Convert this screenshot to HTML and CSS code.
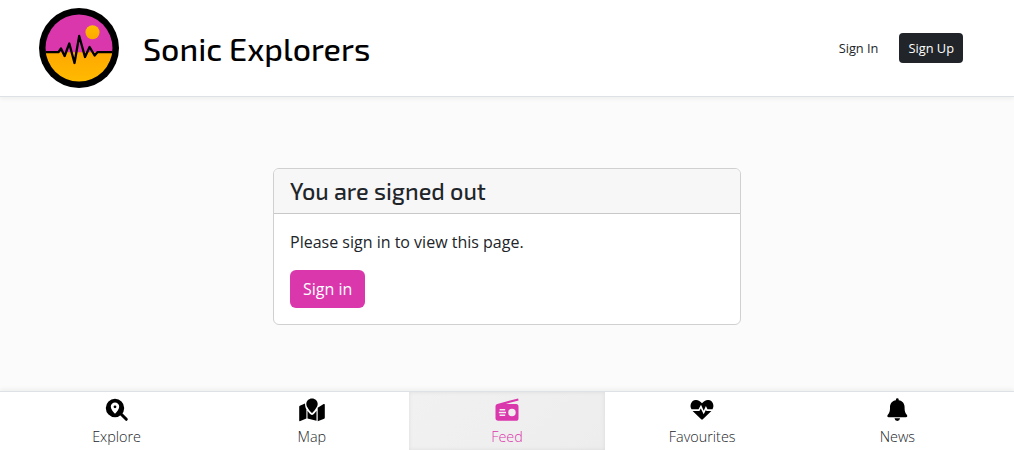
FILE: index.html
```
<!DOCTYPE html>
<html lang="en">
<head>
<meta charset="utf-8">
<title>Sonic Explorers</title>
<link rel="stylesheet" href="styles.css">
</head>
<body>
<header class="header">
  <a class="brand">
    <svg class="logo" viewBox="0 0 80 80">
      <defs>
        <linearGradient id="amber" x1="0" y1="1" x2="0" y2="0"><stop offset="0" stop-color="#ffa800"/><stop offset="1" stop-color="#ffbe00"/></linearGradient>
        <linearGradient id="ground" x1="0" y1="0" x2="0" y2="1"><stop offset="0" stop-color="#ffa800"/><stop offset="1" stop-color="#ffbe00"/></linearGradient>
        <clipPath id="disc"><circle cx="40" cy="40" r="33.500"/></clipPath>
      </defs>
      <circle cx="40" cy="40" r="40"/>
      <g clip-path="url(#disc)">
        <path fill="#db37ad" d="M0 0h80v45H0z"/>
        <path fill="url(#ground)" d="M0 44.200h80V80H0z"/>
        <path class="wave" d="M4 44.200h15.500l2.500-3.700 3.600 7.500 4.700-12.500 5.200 19.500 4.700-27 5.800 21 4.600-10 5 8.500 2.800-3.300H76"/>
      </g>
      <circle cx="53.500" cy="24.300" r="7" fill="url(#amber)"/>
    </svg>
    <h1 class="title">Sonic Explorers</h1>
  </a>
  <div class="actions">
    <a class="btn-small">Sign In</a>
    <a class="btn-small btn-dark">Sign Up</a>
  </div>
</header>
<main class="main">
  <section class="card">
    <h2 class="card-header">You are signed out</h2>
    <div class="card-body">
      <p class="message">Please sign in to view this page.</p>
      <a class="btn-primary">Sign in</a>
    </div>
  </section>
</main>
<nav class="nav">
  <a class="nav-item">
    <svg class="icon" viewBox="0 0 28 24"><path fill-rule="evenodd" d="M12 .8a9.200 9.200 0 1 1 0 18.400 9.200 9.200 0 0 1 0-18.400zM12 4.600a4.200 4.200 0 0 0-4.200 4.200c0 2.300 2.400 5.100 4.200 6.900 1.800-1.800 4.200-4.600 4.200-6.900A4.200 4.200 0 0 0 12 4.600zm0 2.800a1.400 1.400 0 1 1 0 2.800 1.400 1.400 0 0 1 0-2.800z"/><path class="handle" d="M18 16l5.300 5.300"/></svg>
    <span>Explore</span>
  </a>
  <a class="nav-item">
    <svg class="icon" viewBox="0 0 28 24"><path d="M14 .5c3.200 0 5.700 2.400 5.700 5.600 0 3-3.600 7-4.900 8.300q-.8.800-1.600 0C11.900 13.100 8.300 9.100 8.300 6.100 8.300 2.900 10.800.5 14 .5z"/><path d="M1.200 8.700q0-.7.600-1l5.200-2.100c.1 3.100.6 4.500 1.400 5.700v9.200l-6.100 2.600q-1.100.4-1.100-.7zM9.500 12.800c1.300 1.800 2.400 2.900 3 3.500q1.500 1.400 3 0c.6-.6 1.700-1.800 3-3.500v10L9.500 20.500zM19.700 9.700l5.900-3.600q1.200-.5 1.200.7v12.900q0 .7-.6 1l-6.500 2.500z"/></svg>
    <span>Map</span>
  </a>
  <a class="nav-item active">
    <svg class="icon" viewBox="0 0 28 24"><path fill-rule="evenodd" d="M25.100.4l.5 2L12.800 5.900H23q2.500 0 2.500 2.500v11.800q0 2.600-2.600 2.600H5.200q-2.700 0-2.700-2.700V8.300q0-1.800 1.800-2.300zM15.200 14.500a3.750 3.750 0 1 0 7.500 0 3.750 3.750 0 0 0-7.500 0zM6.600 11v1.500h5.600V11zM5.800 13.800v1.500H13v-1.500zM6.600 16.600v1.500h5.600v-1.500z"/></svg>
    <span>Feed</span>
  </a>
  <a class="nav-item">
    <svg class="icon" viewBox="0 0 28 24"><path d="M3.500 11.300C1.300 8 3 2.400 7.700 2.100c2.600-.2 4.500 1.400 6.300 3.200 1.800-1.800 3.700-3.400 6.300-3.200 4.700.3 6.400 5.900 4.200 9.200h-5l-1.600-3.200-2.200 4.600-2.700-5.900-2.500 4.500z"/><path d="M4.600 12.900h6.800l1.400-2.300 2.900 5.700 2.200-4.400.7 1h4.800l-8.600 8.400q-.8.800-1.600 0z"/></svg>
    <span>Favourites</span>
  </a>
  <a class="nav-item">
    <svg class="icon" viewBox="0 0 28 24"><path d="M14.300.2q1.400 0 1.400 1.400v.7c3.700.7 5.900 3.300 5.900 6.900v1.300c0 2.700.7 4.500 2.200 6.300 1 1.200.4 2.400-.9 2.400H5.700c-1.300 0-1.900-1.200-.9-2.400C6.300 15 7 13.200 7 10.500V9.200c0-3.600 2.200-6.200 5.900-6.900v-.7Q12.900.2 14.300.2zM11.500 20.300h5.600q-.4 2.600-2.800 2.600t-2.800-2.600z"/></svg>
    <span>News</span>
  </a>
</nav>
</body>
</html>
```
FILE: styles.css
```
* { box-sizing: border-box; }
body {
  margin: 0;
  height: 450px;
  display: flex;
  flex-direction: column;
  overflow: hidden;
  background: #fbfbfb;
  color: #212529;
  font: 400 16px/24px "Open Sans", sans-serif;
}
h1, h2, p { margin: 0; }
.header {
  height: 97px;
  padding: 0 51px 0 39px;
  display: flex;
  justify-content: space-between;
  align-items: center;
  background: #fff;
  border-bottom: 1px solid #dee2e6;
  box-shadow: 0 2px 4px rgba(0, 0, 0, .05);
}
.brand { display: flex; align-items: center; gap: 24px; }
.logo { width: 80px; height: 80px; }
.wave { fill: none; stroke: #000; stroke-width: 2.300; stroke-linejoin: round; }
.title {
  padding-bottom: 1px;
  color: #000;
  font: 500 32px/38px "Exo 2", "Open Sans", sans-serif;
}
.actions { display: flex; gap: 12px; }
.btn-small {
  padding: 5px 9px;
  height: 30px;
  border-radius: 4px;
  font-size: 12.800px;
  line-height: 20px;
}
.btn-dark { background: #212529; color: #fff; }
.main { flex: 1; display: flex; align-items: flex-start; justify-content: center; padding-top: 71px; }
.card {
  width: 468px;
  height: 157px;
  border: 1px solid #d0d0d0;
  border-radius: 6px;
  background: #fff;
  overflow: hidden;
}
.card-header {
  height: 45px;
  padding: 8px 16px;
  background: #f7f7f7;
  border-bottom: 1px solid #c8c8c8;
  font: 500 23.400px/28px "Exo 2", "Open Sans", sans-serif;
}
.card-body { padding: 16px; display: flex; flex-direction: column; align-items: flex-start; gap: 16px; }
.btn-primary { padding: 7px 13px; height: 38px; border-radius: 6px; background: #db37ad; color: #fff; }
.nav {
  height: 59px;
  display: grid;
  grid-template-columns: repeat(5, 1fr);
  padding: 0 19px;
  background: #fff;
  border-top: 1px solid #dee2e6;
  box-shadow: 0 -2px 4px rgba(0, 0, 0, .05);
}
.nav-item {
  display: flex;
  flex-direction: column;
  align-items: center;
  padding-top: 6px;
  color: #212529;
  font-size: 14.400px;
  font-weight: 300;
  line-height: 22px;
}
.icon { width: 28px; height: 24px; margin-bottom: 4px; fill: #000; }
.handle { stroke: #000; stroke-width: 3; stroke-linecap: round; }
.active {
  color: #db37ad;
  background: linear-gradient(135deg, #f1f1f1, #ededed);
  box-shadow: inset 0 0 4px rgba(0, 0, 0, .08);
}
.active .icon { fill: #db37ad; }
```
